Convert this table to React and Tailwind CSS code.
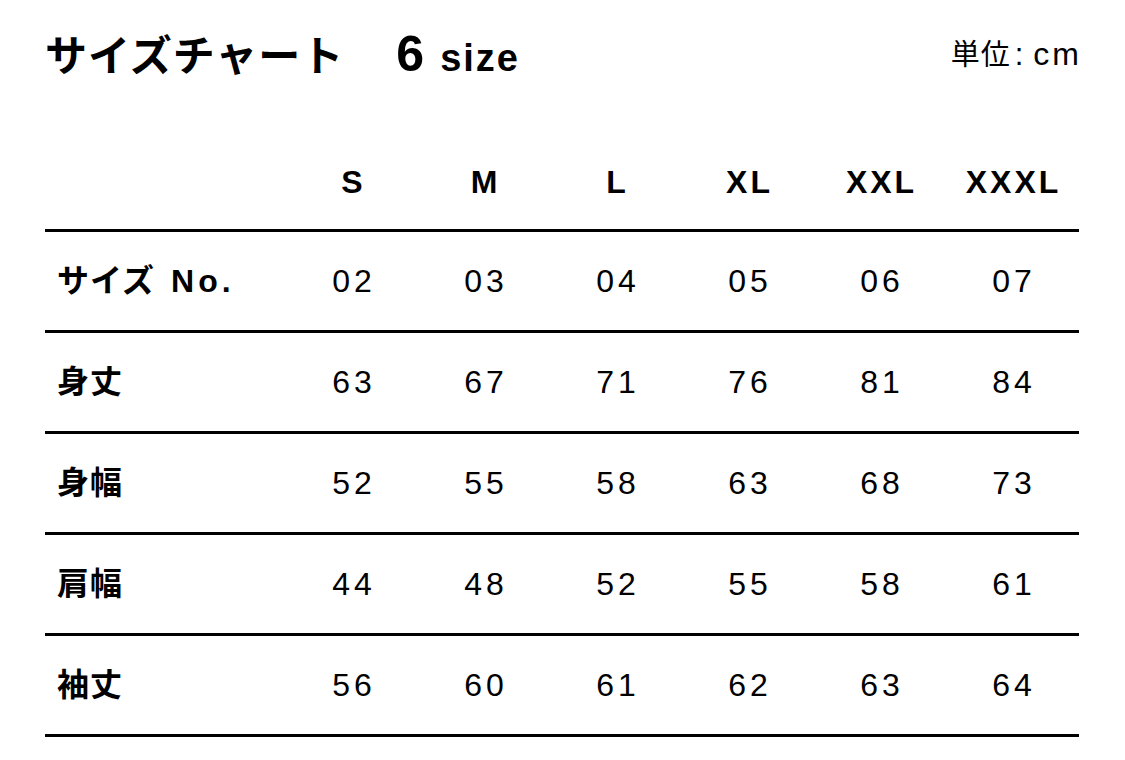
import React from 'react';

const SIZES = ['S', 'M', 'L', 'XL', 'XXL', 'XXXL'];

const ROWS = [
    { label: 'サイズ', suffix: 'No.', values: ['02', '03', '04', '05', '06', '07'] },
    { label: '身丈', values: ['63', '67', '71', '76', '81', '84'] },
    { label: '身幅', values: ['52', '55', '58', '63', '68', '73'] },
    { label: '肩幅', values: ['44', '48', '52', '55', '58', '61'] },
    { label: '袖丈', values: ['56', '60', '61', '62', '63', '64'] },
];

const FONT = { fontFamily: '"Liberation Sans", "Noto Sans CJK JP", sans-serif' };

export default function App() {
    return (
        <div className="w-[1125px] h-[760px] bg-white text-black px-[45px]" style={FONT}>
            {/* Title */}
            <div className="h-[108px] flex items-center justify-between">
                <div className="flex items-baseline">
                    <h1 className="text-[42px] font-bold leading-none tracking-[1px]">サイズチャート</h1>
                    <span className="ml-[52px] text-[50px] font-bold leading-none">6</span>
                    <span className="ml-[16px] text-[38px] font-bold leading-none tracking-[2px]">size</span>
                </div>
                <div className="flex items-baseline leading-none -mr-[2px]">
                    <span className="text-[29px] tracking-[1px]">単位</span>
                    <span className="text-[31px] ml-[4px] mr-[10px]">:</span>
                    <span className="text-[32px] tracking-[3px]">cm</span>
                </div>
            </div>

            {/* Table */}
            <div className="w-[1034px]">
                <div className="grid grid-cols-[241px_repeat(6,132px)] h-[124px] pt-[26px] items-center border-b-[3px] border-black">
                    <div />
                    {SIZES.map((s) => (
                        <div key={s} className="text-center text-[32px] font-bold leading-none tracking-[3px] pl-[3px]">
                            {s}
                        </div>
                    ))}
                </div>
                {ROWS.map((row) => (
                    <div
                        key={row.label}
                        className="grid grid-cols-[241px_repeat(6,132px)] h-[101px] items-center border-b-[3px] border-black"
                    >
                        <div className="pl-[12px] flex items-baseline leading-none font-bold">
                            <span className="text-[32px] tracking-[1px]">{row.label}</span>
                            {row.suffix && (
                                <span className="ml-[16px] text-[32px] tracking-[4px]">{row.suffix}</span>
                            )}
                        </div>
                        {row.values.map((v, i) => (
                            <div key={i} className="text-center text-[32px] leading-none tracking-[4px] pl-[4px]">
                                {v}
                            </div>
                        ))}
                    </div>
                ))}
            </div>
        </div>
    );
}
